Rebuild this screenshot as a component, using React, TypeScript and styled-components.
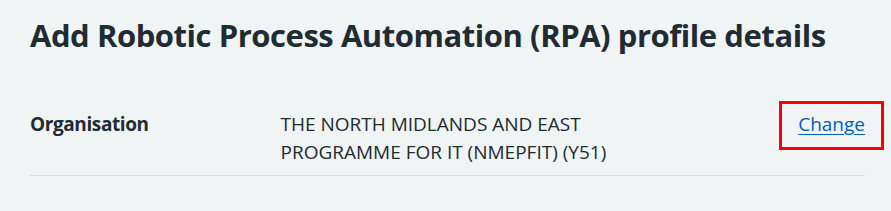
import React from "react";
import styled, { createGlobalStyle } from "styled-components";

const GlobalStyle = createGlobalStyle`
  html, body {
    margin: 0;
    padding: 0;
    background: #f0f4f5;
  }
  body {
    font-family: "Open Sans", "Noto Sans", Arial, sans-serif;
    color: #212b32;
    -webkit-font-smoothing: antialiased;
  }
`;

const Page = styled.main`
  padding: 13px 26px 0 30px;
`;

const Heading = styled.h1`
  margin: 0 0 44px;
  font-size: 31px;
  line-height: 44px;
  font-weight: 700;
  letter-spacing: -0.45px;
  white-space: nowrap;
`;

const SummaryList = styled.dl`
  margin: 0;
  display: grid;
  grid-template-columns: 30% 50% 20%;
`;

const Row = styled.div`
  display: contents;
`;

const Cell = styled.div<{ $align?: "left" | "right" }>`
  margin: 0;
  padding: 9px 24px 9px 0;
  font-size: 19px;
  line-height: 28px;
  border-bottom: 1px solid #d8dde0;
  text-align: ${({ $align }) => $align ?? "left"};

  &:last-child {
    padding-right: 0;
  }
`;

const Key = styled(Cell).attrs({ as: "dt" })`
  font-weight: 700;
  letter-spacing: -0.4px;
`;

const Value = styled(Cell).attrs({ as: "dd" })`
  font-weight: 400;
`;

const Highlight = styled.span`
  position: relative;
  display: inline-block;

  &::after {
    content: "";
    position: absolute;
    top: -9px;
    bottom: -12px;
    left: -19px;
    right: -19px;
    border: 3px solid #ff0000;
    pointer-events: none;
  }
`;

const ChangeLink = styled.a`
  color: #005eb8;
  text-decoration: underline;
  text-underline-offset: 3px;
  text-decoration-thickness: 1px;
  cursor: pointer;
`;

export default function App() {
  return (
    <>
      <GlobalStyle />
      <Page>
        <Heading>Add Robotic Process Automation (RPA) profile details</Heading>
        <SummaryList>
          <Row>
            <Key>Organisation</Key>
            <Value>THE NORTH MIDLANDS AND EAST PROGRAMME FOR IT (NMEPFIT) (Y51)</Value>
            <Cell as="dd" $align="right">
              <Highlight>
                <ChangeLink href="#">Change</ChangeLink>
              </Highlight>
            </Cell>
          </Row>
        </SummaryList>
      </Page>
    </>
  );
}
